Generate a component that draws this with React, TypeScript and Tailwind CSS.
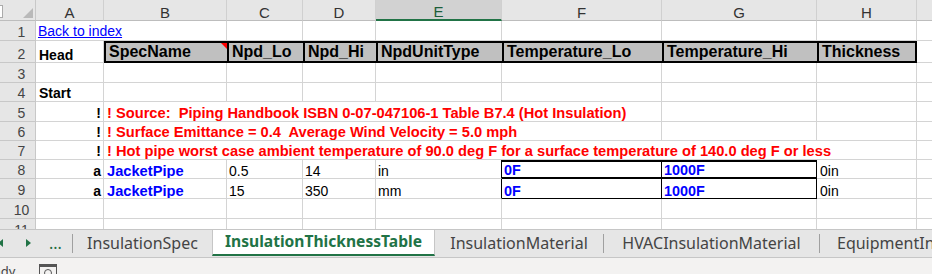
import React from "react";
import clsx from "clsx";
import { twMerge } from "tailwind-merge";

const cn = (...a: any[]) => twMerge(clsx(a));

const letters = ["A", "B", "C", "D", "E", "F", "G", "H", "I"];
const heads = ["SpecName", "Npd_Lo", "Npd_Hi", "NpdUnitType", "Temperature_Lo", "Temperature_Hi", "Thickness"];

// every size class is followed by its own leading, so tailwind-merge keeps both
const Cell = ({ className, children }: { className?: string; children?: React.ReactNode }) => (
  <div
    className={cn(
      "flex items-end overflow-hidden whitespace-nowrap border-r border-b border-[#d4d4d4] px-[2px] text-[14px] leading-[14px]",
      className
    )}
  >
    {children}
  </div>
);

const empty = (n: number) => Array.from({ length: n }, (_, i) => <Cell key={"e" + i} />);

const RowNum = ({ n }: { n: number }) => (
  <div className="flex items-end justify-center border-r border-b border-[#c8c8c8] bg-[#e6e6e6] pl-2 text-[14px] leading-[15px] text-[#444]">
    {n}
  </div>
);

const ColHead = ({ label, active }: { label: string; active?: boolean }) => (
  <div
    className={cn(
      "flex items-end justify-center border-r border-b border-r-[#d0d0d0] border-b-[#bdbdbd] bg-[#e6e6e6] text-[15px] leading-[14px] text-[#333]",
      active && "border-b-2 border-b-[#217346] bg-[#d2d2d2] text-[#1d5e3a]"
    )}
  >
    {label}
  </div>
);

const Corner = () => (
  <div className="relative border-r border-b border-r-[#c8c8c8] border-b-[#bdbdbd] bg-[#e6e6e6]">
    <div className="absolute left-0 top-[5px] h-[13px] w-[3px] border border-l-0 border-[#ababab] bg-white" />
    <svg className="absolute right-[2px] bottom-[2px]" width="10" height="10" viewBox="0 0 10 10">
      <polygon points="10,0 10,10 0,10" fill="#b9b9b9" />
    </svg>
  </div>
);

const RedNote = ({ span, text }: { span: string; text: string }) => (
  <Cell className={cn(span, "whitespace-pre pl-[3px] text-[14.67px] leading-[16px] font-bold text-[#ff0000]")}>
    {text}
  </Cell>
);

const Bang = () => <Cell className="justify-end text-[14px] leading-[16px] font-bold">!</Cell>;

const DataRow = ({ n, lo, hi, unit }: { n: number; lo: string; hi: string; unit: string }) => {
  const box =
    n === 8
      ? "border-t-2 border-t-black border-b-2 border-b-black border-r-black"
      : "border-b-black border-r-black";
  return (
    <>
      <RowNum n={n} />
      <Cell className="justify-end font-bold">a</Cell>
      <Cell className="pl-[3px] text-[14.67px] leading-[14px] font-bold text-[#0000ff]">JacketPipe</Cell>
      <Cell>{lo}</Cell>
      <Cell>{hi}</Cell>
      <Cell className="border-r-black">{unit}</Cell>
      <Cell className={cn(box, "text-[14.4px] leading-[14px] font-bold text-[#0000ff]")}>0F</Cell>
      <Cell className={cn(box, "text-[14.4px] leading-[14px] font-bold text-[#0000ff]")}>1000F</Cell>
      <Cell className="pl-[3px]">0in</Cell>
      <Cell />
    </>
  );
};

const Tab = ({ w, children }: { w: string; children: React.ReactNode }) => (
  <div className={cn("flex h-[26px] shrink-0 items-center justify-center", w)}>{children}</div>
);

const Sep = () => <div className="mt-[4px] h-[19px] w-px shrink-0 bg-[#a0a0a0]" />;

export default function App() {
  return (
    <div className="h-[274px] w-[932px] overflow-hidden bg-white font-['Liberation_Sans',Arial,sans-serif] text-[14px] text-black">
      <div className="grid h-[229px] grid-cols-[36px_68px_123px_76px_73px_126px_160px_155px_100px_100px] grid-rows-[21px_20px_22px_20px_19px_20px_19px_19px_19px_20px_20px_20px] overflow-hidden">
        <Corner />
        {letters.map((l) => (
          <ColHead key={l} label={l} active={l === "E"} />
        ))}

        <RowNum n={1} />
        <Cell className="col-span-2 pb-px text-[14px] leading-[16px]">
          <span className="text-[#0000ff] underline">Back to index</span>
        </Cell>
        {empty(7)}

        <RowNum n={2} />
        <Cell className="pl-[3px] font-bold">Head</Cell>
        {heads.map((h, i) => (
          <Cell
            key={h}
            className={cn(
              "relative border-y-2 border-l-2 border-r-0 border-black bg-[#c0c0c0] pl-[3px] text-[16px] leading-[18px] font-bold",
              i === heads.length - 1 && "border-r-2"
            )}
          >
            {h}
            {i === 0 && (
              <svg className="absolute right-0 top-0" width="6" height="6" viewBox="0 0 6 6">
                <polygon points="0,0 6,0 6,6" fill="#ff0000" />
              </svg>
            )}
          </Cell>
        ))}
        <Cell />

        <RowNum n={3} />
        {empty(9)}

        <RowNum n={4} />
        <Cell className="pl-[3px] text-[14px] leading-[16px] font-bold">Start</Cell>
        {empty(8)}

        <RowNum n={5} />
        <Bang />
        <RedNote span="col-span-5" text="! Source:  Piping Handbook ISBN 0-07-047106-1 Table B7.4 (Hot Insulation)" />
        {empty(3)}

        <RowNum n={6} />
        <Bang />
        <RedNote span="col-span-5" text="! Surface Emittance = 0.4  Average Wind Velocity = 5.0 mph" />
        {empty(3)}

        <RowNum n={7} />
        <Bang />
        <RedNote
          span="col-span-7"
          text="! Hot pipe worst case ambient temperature of 90.0 deg F for a surface temperature of 140.0 deg F or less"
        />
        {empty(1)}

        <DataRow n={8} lo="0.5" hi="14" unit="in" />
        <DataRow n={9} lo="15" hi="350" unit="mm" />

        <RowNum n={10} />
        {empty(9)}

        <RowNum n={11} />
        {empty(9)}
      </div>

      {/* sheet tabs */}
      <div className="flex h-[29px] items-start border-y border-[#c6c6c6] bg-[#e6e6e6] font-['Noto_Sans',sans-serif] text-[16px] text-[#444]">
        <div className="flex h-[26px] w-[72px] shrink-0 items-center">
          <svg width="34" height="26" viewBox="0 0 34 26" className="shrink-0">
            <polygon points="3,9 3,17 -2,13" fill="#217346" />
            <polygon points="26,9 26,17 31,13" fill="#217346" />
          </svg>
          <span className="ml-[15px] text-[#1e6b41]">...</span>
        </div>
        <Sep />
        <Tab w="w-[139px]">InsulationSpec</Tab>
        <div className="flex h-[26px] w-[223px] shrink-0 items-center justify-center border-x border-b-2 border-x-[#c6c6c6] border-b-[#217346] bg-white text-[15.6px] font-bold text-[#217346]">
          InsulationThicknessTable
        </div>
        <Tab w="w-[168px]">InsulationMaterial</Tab>
        <Sep />
        <Tab w="w-[215px]">HVACInsulationMaterial</Tab>
        <Sep />
        <div className="flex h-[26px] shrink-0 items-center whitespace-nowrap pl-[17px]">EquipmentInsulation</div>
      </div>

      {/* status bar */}
      <div className="flex h-[16px] bg-[#f3f2f1] font-['Noto_Sans',sans-serif] text-[13px] text-[#444]">
        <div className="w-[39px] shrink-0 overflow-hidden pt-[5px] leading-[16px]">
          <span className="-ml-[22px] inline-block">Ready</span>
        </div>
        <svg width="18" height="16" viewBox="0 0 18 16" className="mt-[6px] shrink-0">
          <rect x="0.5" y="0.5" width="17" height="14" fill="none" stroke="#555" />
          <rect x="0.5" y="0.5" width="17" height="2.5" fill="#555" />
          <circle cx="9" cy="9" r="3.5" fill="none" stroke="#555" />
        </svg>
      </div>
    </div>
  );
}
